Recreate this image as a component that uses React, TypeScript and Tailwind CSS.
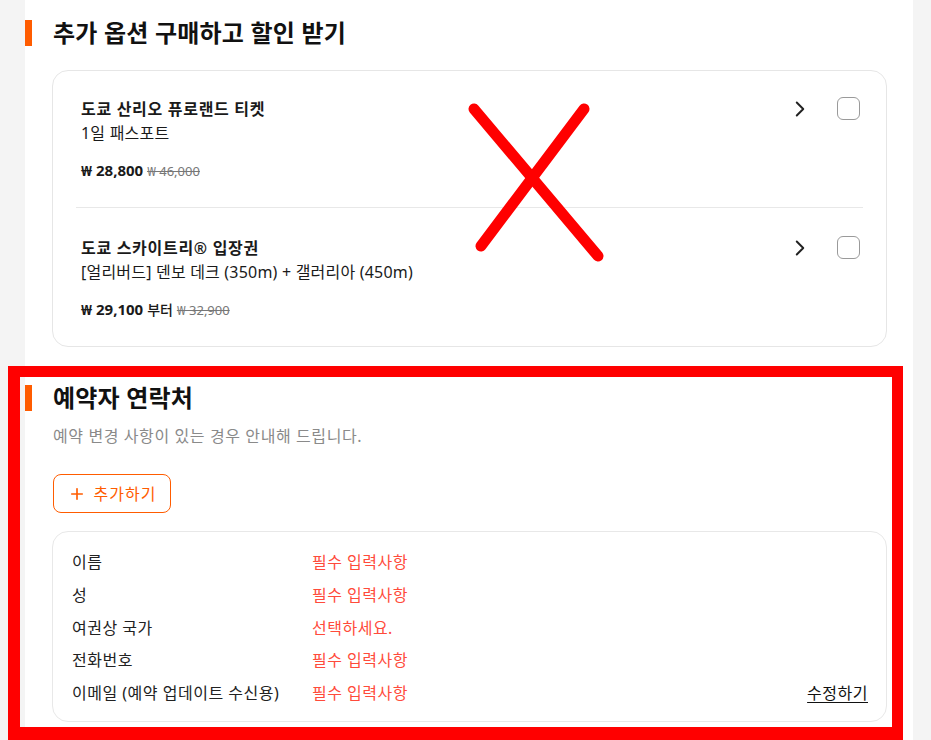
import { ChevronRight, Plus } from 'lucide-react'

const options = [
  {
    title: '도쿄 산리오 퓨로랜드 티켓',
    sub: '1일 패스포트',
    price: '₩ 28,800',
    suffix: '',
    original: '₩ 46,000',
  },
  {
    title: '도쿄 스카이트리® 입장권',
    sub: '[얼리버드] 덴보 데크 (350m) + 갤러리아 (450m)',
    price: '₩ 29,100',
    suffix: '부터',
    original: '₩ 32,900',
  },
]

const contactRows = [
  { label: '이름', value: '필수 입력사항' },
  { label: '성', value: '필수 입력사항' },
  { label: '여권상 국가', value: '선택하세요.' },
  { label: '전화번호', value: '필수 입력사항' },
  { label: '이메일 (예약 업데이트 수신용)', value: '필수 입력사항' },
]

function SectionTitle({ children }: { children: React.ReactNode }) {
  return (
    <div className="flex items-center">
      <div className="w-[7px] h-[26px] bg-[#ff5c00]" />
      <h2 className="ml-[21px] text-[24px] leading-[32px] font-bold text-[#111] tracking-[0.2px]">{children}</h2>
    </div>
  )
}

export default function App() {
  return (
    <div className="relative h-[740px] overflow-hidden bg-[#f4f4f4] font-['Noto_Sans','Noto_Sans_CJK_KR',sans-serif] text-[#1a1a1a]">
      <div className="ml-[25px] w-[888px] h-full bg-white pt-[17px]">
        <SectionTitle>추가 옵션 구매하고 할인 받기</SectionTitle>

        <div className="ml-[27px] mr-[26px] mt-[21px] rounded-[16px] border border-[#e6e6e6] px-[23px]">
          {options.map((o, i) => (
            <div
              key={o.title}
              className={`flex pl-[5px] pr-[3px] pb-[26px] ${i > 0 ? 'pt-[28px] border-t border-[#e8e8e8]' : 'pt-[26px]'}`}
            >
              <div className="flex-1">
                <div className="text-[16px] leading-[24px] font-bold tracking-[0.7px]">{o.title}</div>
                <div className="text-[16px] leading-[24px] tracking-[0.2px]">{o.sub}</div>
                <div className="mt-[15px] flex items-baseline gap-[4px] leading-[20px]">
                  <span className="text-[15px] font-bold">{o.price}</span>
                  {o.suffix && <span className="text-[14px] font-medium">{o.suffix}</span>}
                  <span className="text-[13px] text-[#777] line-through">{o.original}</span>
                </div>
              </div>
              <div className="flex items-start gap-[24px]">
                <ChevronRight size={26} strokeWidth={1.8} className="-mt-[1px] text-[#222]" />
                <div className="w-[23px] h-[23px] rounded-[6px] border border-[#9a9a9a]" />
              </div>
            </div>
          ))}
        </div>

        <div className="mt-[35px]">
          <SectionTitle>예약자 연락처</SectionTitle>
          <p className="ml-[28px] mt-[10px] text-[16px] leading-[24px] text-[#8a8a8a] tracking-[0.6px]">
            예약 변경 사항이 있는 경우 안내해 드립니다.
          </p>
          <button className="ml-[28px] mt-[26px] flex items-center gap-[8px] h-[39px] w-[118px] justify-center rounded-[8px] border border-[#ff5c00] text-[16px] tracking-[1px] text-[#ff5c00]">
            <Plus size={18} strokeWidth={2.2} />
            추가하기
          </button>

          <div className="ml-[27px] mr-[26px] mt-[18px] rounded-[16px] border border-[#e8e8e8] pl-[19px] pr-[18px] pt-[18px] pb-[16px] flex flex-col gap-[8.75px]">
            {contactRows.map((r, i) => (
              <div key={r.label} className="flex items-center text-[16px] leading-[24px] tracking-[0.5px]">
                <span className="w-[240px] shrink-0 text-[#222]">{r.label}</span>
                <span className="flex-1 text-[#ff4b3b]">{r.value}</span>
                {i === contactRows.length - 1 && (
                  <span className="underline underline-offset-[3px] text-[#111]">수정하기</span>
                )}
              </div>
            ))}
          </div>
        </div>
      </div>

      {/* annotation overlays */}
      <svg className="absolute left-0 top-0 pointer-events-none" width="931" height="740">
        <line x1="474" y1="109" x2="598" y2="256" stroke="#ff0000" strokeWidth="11" strokeLinecap="round" />
        <line x1="584" y1="109" x2="481" y2="246" stroke="#ff0000" strokeWidth="11" strokeLinecap="round" />
      </svg>
      <div className="absolute left-[8px] top-[366px] w-[895px] h-[374px] border-t-[11px] border-l-[12px] border-r-[11px] border-b-[13px] border-[#ff0000] pointer-events-none" />
    </div>
  )
}
